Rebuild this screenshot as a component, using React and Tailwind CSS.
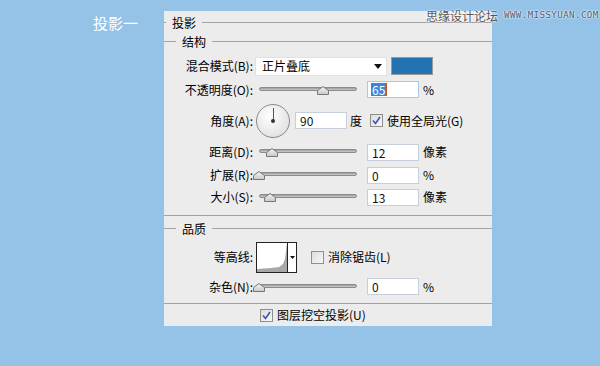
import React from 'react';

const font = { fontFamily: '"Noto Sans CJK SC", "Noto Sans", sans-serif' };

const Slider = ({ pos }) => (
    <div className="relative w-[98px] h-[16px] ml-[4px] shrink-0">
        <div className="absolute left-0 right-0 top-[5px] h-[4px] rounded-full border border-[#8c8c8c] bg-gradient-to-b from-[#9a9a9a] to-[#d0d0d0]" />
        <svg className="absolute top-[4px]" style={{ left: pos - 6 }} width="12" height="9" viewBox="0 0 12 9">
            <defs>
                <linearGradient id="th" x1="0" y1="0" x2="0" y2="1">
                    <stop offset="0" stopColor="#f4f4f4" />
                    <stop offset="1" stopColor="#c8c8c8" />
                </linearGradient>
            </defs>
            <polygon points="0.5,8.5 0.5,4.5 6,0.5 11.5,4.5 11.5,8.5" fill="url(#th)" stroke="#767676" />
        </svg>
    </div>
);

const Input = ({ value, className = '' }) => (
    <div className={`w-[52px] h-[17px] bg-white border border-[#c7d0da] text-[12px] leading-[15px] pl-[4px] text-[#111] ${className}`}>
        {value}
    </div>
);

const Checkbox = ({ checked }) => (
    <div className="w-[13px] h-[13px] border border-[#8e8f8f] bg-gradient-to-br from-[#dcdcdc] to-[#f8f8f8] flex items-center justify-center shrink-0">
        {checked && (
            <svg width="9" height="9" viewBox="0 0 9 9">
                <path d="M1 4.5 L3.5 7.5 L8 1" fill="none" stroke="#3a57a8" strokeWidth="1.6" />
            </svg>
        )}
    </div>
);

const Label = ({ children }) => (
    <div className="w-[89px] text-right text-[12px] text-black shrink-0 whitespace-nowrap">{children}</div>
);

const Section = ({ title, className = '' }) => (
    <div className={`flex items-center ${className}`}>
        <div className="w-[12px] h-px bg-[#a3a3a3]" />
        <span className="px-[6px] text-[12px] text-black">{title}</span>
        <div className="flex-1 h-px bg-[#a3a3a3]" />
    </div>
);

const SliderRow = ({ label, pos, value, unit, h = 'h-[22px]' }) => (
    <div className={`flex items-center ${h}`}>
        <Label>{label}</Label>
        <div className="w-[2px]" />
        <Slider pos={pos} />
        <div className="w-[10px]" />
        <Input value={value} />
        <span className="ml-[4px] text-[12px] text-black">{unit}</span>
    </div>
);

export default function App() {
    return (
        <div className="relative w-[600px] h-[366px] bg-[#94c3e7] flex overflow-hidden" style={font}>
            <div className="w-[164px] shrink-0 pl-[93px] pt-[13px] text-white text-[15px] leading-[20px]">投影一</div>

            <div className="mt-[11px] w-[328px] h-[315px] bg-[#ececec] flex flex-col overflow-hidden">
                {/* 投影 */}
                <div className="flex items-center h-[24px]">
                    <div className="w-[2px] h-px bg-[#a3a3a3]" />
                    <span className="px-[6px] text-[12px] text-black">投影</span>
                    <div className="flex-1 h-px bg-[#a3a3a3]" />
                </div>
                <Section title="结构" className="h-[14px]" />

                {/* 混合模式 */}
                <div className="flex items-center h-[24px] mt-[6px]">
                    <Label>混合模式(B):</Label>
                    <div className="w-[2px]" />
                    <div className="w-[132px] h-[19px] bg-white border border-[#e2e2e2] flex items-center pl-[6px] text-[12px] text-black">
                        <span className="flex-1">正片叠底</span>
                        <svg width="8" height="5" viewBox="0 0 8 5" className="mr-[4px]">
                            <polygon points="0,0 8,0 4,5" fill="#111" />
                        </svg>
                    </div>
                    <div className="ml-[4px] w-[42px] h-[18px] bg-[#2373b3] border border-[#9a9a9a]" />
                </div>

                {/* 不透明度 */}
                <div className="flex items-center h-[24px]">
                    <Label>不透明度(O):</Label>
                    <div className="w-[2px]" />
                    <Slider pos={64} />
                    <div className="w-[10px]" />
                    <div className="w-[52px] h-[17px] bg-white border border-[#a8c8e8] text-[12px] leading-[15px] pl-[3px] flex items-center">
                        <span className="bg-[#3a86d8] text-white px-[1px] leading-[13px]">65</span>
                        <span className="w-px h-[13px] bg-[#c05a10]" />
                    </div>
                    <span className="ml-[4px] text-[12px] text-black">%</span>
                </div>

                {/* 角度 */}
                <div className="flex items-center h-[34px] mt-[2px]">
                    <Label>角度(A):</Label>
                    <div className="w-[3px]" />
                    <div className="relative w-[34px] h-[34px] rounded-full border border-[#8a8a8a] bg-[radial-gradient(circle_at_40%_35%,#ffffff,#e4e4e4_70%,#cfcfcf)] shrink-0">
                        <div className="absolute left-[15.5px] top-[3px] w-px h-[13px] bg-[#555]" />
                        <div className="absolute left-[14px] top-[14.5px] w-[4px] h-[4px] rounded-full bg-[#333]" />
                    </div>
                    <Input value="90" className="ml-[5px] w-[42px]" />
                    <span className="ml-[3px] text-[12px] text-black">度</span>
                    <div className="ml-[8px]"><Checkbox checked /></div>
                    <span className="ml-[4px] text-[12px] text-black">使用全局光(G)</span>
                </div>

                <SliderRow label="距离(D):" pos={13} value="12" unit="像素" h="h-[24px] mt-[3px]" />
                <SliderRow label="扩展(R):" pos={0} value="0" unit="%" h="h-[23px]" />
                <SliderRow label="大小(S):" pos={11} value="13" unit="像素" />

                <div className="h-px bg-[#a3a3a3] mt-[7px] shrink-0" />
                <Section title="品质" className="h-[26px]" />

                {/* 等高线 */}
                <div className="flex items-center h-[32px]">
                    <Label>等高线:</Label>
                    <div className="w-[3px]" />
                    <div className="w-[41px] h-[31px] border border-[#222] bg-white flex shrink-0">
                        <div className="flex-1 relative">
                            <svg className="absolute inset-0" width="30" height="29" viewBox="0 0 30 29">
                                <path d="M0 29 L0 26 L14 25 L22 24 L26 21 L28 16 L29 8 L30 0 L30 29 Z" fill="#a7a7a7" />
                            </svg>
                        </div>
                        <div className="w-[9px] border-l border-[#222] flex items-center justify-center">
                            <svg width="5" height="3" viewBox="0 0 5 3">
                                <polygon points="0,0 5,0 2.5,3" fill="#111" />
                            </svg>
                        </div>
                    </div>
                    <div className="ml-[14px]"><Checkbox /></div>
                    <span className="ml-[4px] text-[12px] text-black">消除锯齿(L)</span>
                </div>

                <SliderRow label="杂色(N):" pos={0} value="0" unit="%" h="h-[24px] mt-[2px]" />

                <div className="h-px bg-[#a3a3a3] mt-[5px] shrink-0" />
                <div className="flex items-center h-[22px] pl-[96px]">
                    <Checkbox checked />
                    <span className="ml-[4px] text-[12px] text-black">图层挖空投影(U)</span>
                </div>
            </div>

            {/* watermark */}
            <div className="absolute left-[426px] top-[7px] flex items-center gap-[6px]">
                <span className="text-[12px] text-[#555] [text-shadow:0_0_2px_#fff,0_0_2px_#fff]">思缘设计论坛</span>
                <span className="text-[9px] text-[#4a5a6a] tracking-[0.5px] [text-shadow:0_0_2px_#fff,0_0_2px_#fff]" style={{ fontFamily: '"DejaVu Sans Mono", monospace' }}>WWW.MISSYUAN.COM</span>
            </div>
        </div>
    );
}
